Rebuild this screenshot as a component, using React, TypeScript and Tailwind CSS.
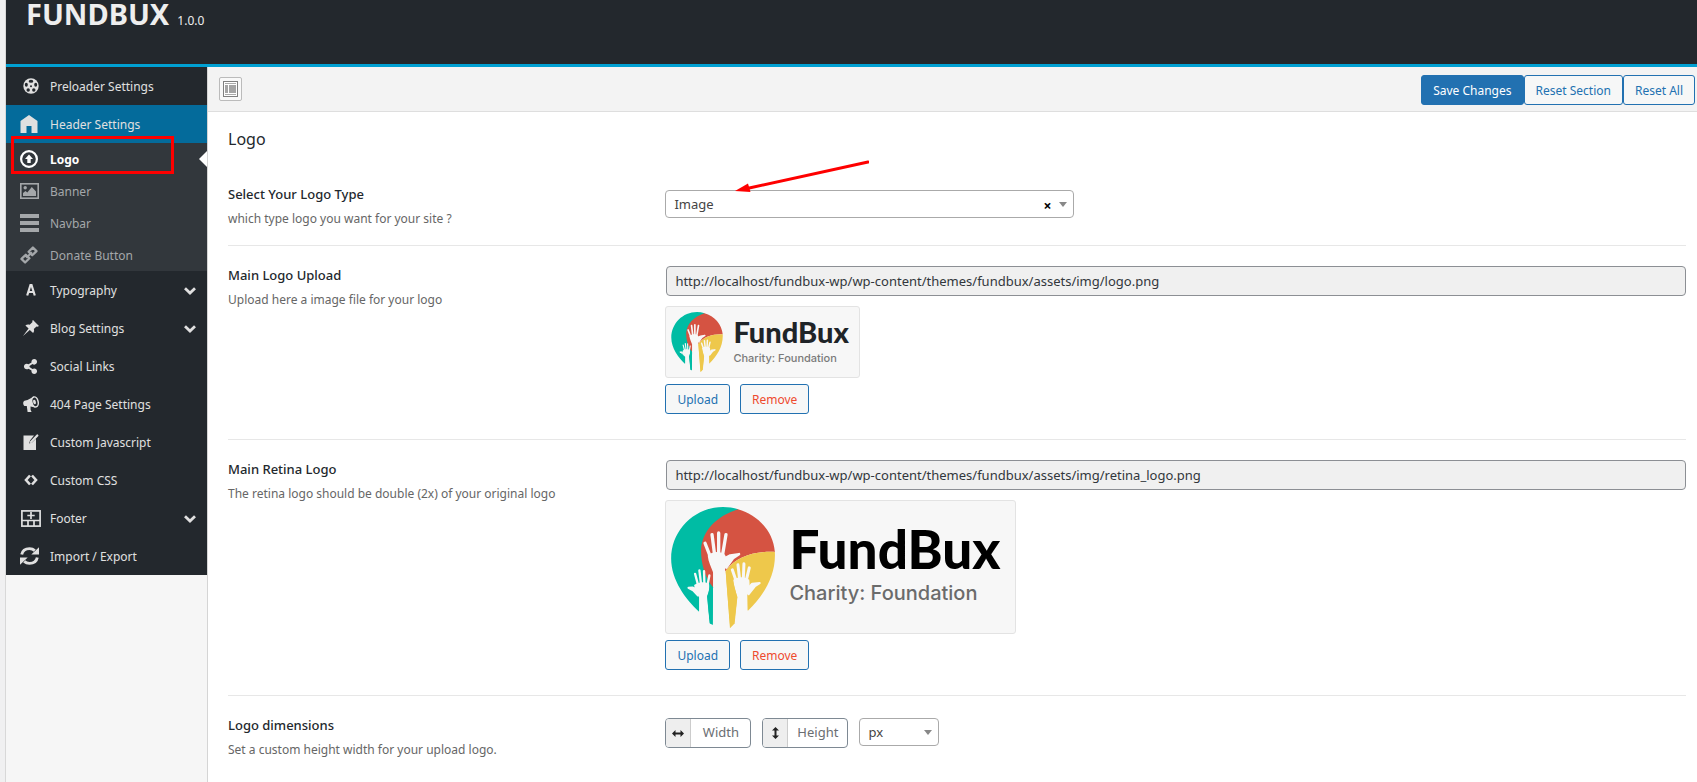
import type { ReactNode } from "react";
import { FaShareAlt } from "react-icons/fa";

type IconProps = { className?: string };

function ReelIcon({ className }: IconProps) {
  return (
    <svg viewBox="0 0 16 16" className={className} aria-hidden="true">
      <circle cx="8" cy="8" r="7.700" fill="currentColor" />
      <g fill="#23282d">
        <ellipse cx="8" cy="3.300" rx="2.300" ry="1.500" />
        <ellipse cx="3.300" cy="6.800" rx="1.500" ry="2" />
        <ellipse cx="12.700" cy="6.800" rx="1.500" ry="2" />
        <ellipse cx="5.200" cy="12" rx="1.700" ry="1.700" />
        <ellipse cx="10.800" cy="12" rx="1.700" ry="1.700" />
        <circle cx="8" cy="8.200" r="1" />
      </g>
    </svg>
  );
}

function HomeIcon({ className }: IconProps) {
  return (
    <svg viewBox="0 0 18 18" className={className} fill="currentColor" aria-hidden="true">
      <path d="M9 0 17.500 6v12H11.500v-7H6.500v7H.5V6Z" />
    </svg>
  );
}

function CircleUpIcon({ className }: IconProps) {
  return (
    <svg viewBox="0 0 18 18" className={className} aria-hidden="true">
      <circle cx="9" cy="9" r="7.900" fill="none" stroke="currentColor" strokeWidth="2.200" />
      <path d="m9 4.600 4 4.500h-2.300v4H7.300v-4H5Z" fill="currentColor" />
    </svg>
  );
}

function PictureIcon({ className }: IconProps) {
  return (
    <svg viewBox="0 0 19 16" className={className} aria-hidden="true">
      <rect x=".8" y=".8" width="17.400" height="14.400" fill="none" stroke="currentColor" strokeWidth="1.600" />
      <circle cx="5.200" cy="4.800" r="1.700" fill="currentColor" />
      <path d="M3 13v-3l2.500-1.900L7.300 9.400 11.800 4 16 8.500V13Z" fill="currentColor" />
    </svg>
  );
}

function LinesIcon({ className }: IconProps) {
  return (
    <svg viewBox="0 0 19 18" className={className} fill="currentColor" aria-hidden="true">
      <path d="M0 0h19v4H0ZM0 7h19v4H0ZM0 14h19v4H0Z" />
    </svg>
  );
}

function LinkIcon({ className }: IconProps) {
  return (
    <svg viewBox="0 0 18 18" className={className} fill="none" stroke="currentColor" strokeWidth="2.300" strokeLinejoin="round" aria-hidden="true">
      <path d="m8.600 5.700 4.300-4.200 3.600 3.600-4.300 4.200Z" />
      <path d="m1.500 12.900 4.300-4.200 3.600 3.600-4.300 4.200Z" />
      <path d="m6.300 11.900 5.600-5.600" strokeWidth="2" />
    </svg>
  );
}

function LetterIcon({ className }: IconProps) {
  return (
    <svg viewBox="0 0 12 12" className={className} fill="none" stroke="currentColor" strokeWidth="2.200" aria-hidden="true">
      <path d="M2.200 11.500 5.500 1h1l3.300 10.500M3.500 8h5" />
    </svg>
  );
}

function PinIcon({ className }: IconProps) {
  return (
    <svg viewBox="0 0 16 16" className={className} fill="currentColor" aria-hidden="true">
      <path d="m10 0 6 6-1.500.7-1-.3-2.700 2.700c.6 1.500.3 2.700-.7 4L6.800 9.900 0 16l5.600-7.400-3.200-3.200c1.300-1 2.800-1.200 4.300-.6l2.800-2.700-.3-1Z" />
    </svg>
  );
}

function MegaphoneIcon({ className }: IconProps) {
  return (
    <svg viewBox="0 0 16 16" className={className} aria-hidden="true">
      <path d="M11 .5 4.500 4 1.500 4.800C-.3 5.500-.2 9.300 1.500 10l2.300.1L4.600 16h4l-1-2-.1-3.400 4.500.9Z" fill="currentColor" />
      <ellipse cx="12" cy="5.900" rx="3.100" ry="5.100" fill="#23282d" stroke="currentColor" strokeWidth="1.500" transform="rotate(-14 12 5.900)" />
      <ellipse cx="11.500" cy="6" rx="1.400" ry="2.300" fill="currentColor" transform="rotate(-14 11.500 6)" />
    </svg>
  );
}

function EditIcon({ className }: IconProps) {
  return (
    <svg viewBox="0 0 16 16" className={className} aria-hidden="true">
      <path d="M.5 1.500H11L7 6.500l-.8 3 2.800-1 4-3.800V16H.5Z" fill="currentColor" />
      <path d="m8 8 6.300-6.500" stroke="currentColor" strokeWidth="2.200" strokeLinecap="round" />
    </svg>
  );
}

function CodeIcon({ className }: IconProps) {
  return (
    <svg viewBox="0 0 14 12" className={className} fill="none" stroke="currentColor" strokeWidth="2.600" aria-hidden="true">
      <path d="M6 1.500 2 6l4 4.500M8 1.500 12 6l-4 4.500" />
    </svg>
  );
}

function FooterIcon({ className }: IconProps) {
  return (
    <svg viewBox="0 0 20 17" className={className} fill="none" stroke="currentColor" strokeWidth="1.700" aria-hidden="true">
      <rect x=".9" y=".9" width="18.200" height="15.200" />
      <path d="M1 10.500h18M7 10.500V16M13 10.500V16" />
      <path d="M10 2v7M6.300 5.500h7.400" />
    </svg>
  );
}

function RefreshIcon({ className }: IconProps) {
  return (
    <svg viewBox="0 0 19 18" className={className} aria-hidden="true">
      <path d="M1.700 7.500C2.500 3.500 6 1.600 9.500 1.600c2 0 3.900.7 5.300 2M17.300 10.500c-.8 4-4.300 5.900-7.800 5.900-2 0-3.900-.7-5.300-2" fill="none" stroke="currentColor" strokeWidth="2.900" />
      <path d="M19 .3v7.200h-7.700ZM0 17.700v-7.200h7.700Z" fill="currentColor" />
    </svg>
  );
}

function ChevronIcon() {
  return (
    <svg viewBox="0 0 12 8" className="mr-[11px] ml-auto h-2 w-3" fill="none" stroke="currentColor" strokeWidth="2.800" aria-hidden="true">
      <path d="m1 1.300 5 4.700 5-4.700" />
    </svg>
  );
}

function CaretIcon({ className }: IconProps) {
  return (
    <svg viewBox="0 0 8 5" className={className} fill="#888" aria-hidden="true">
      <path d="M0 0h8L4 5Z" />
    </svg>
  );
}

function Emblem({ className }: IconProps) {
  return (
    <svg viewBox="64 170 312 364" className={className} aria-hidden="true">
      <path fill="#00bca4" d="M148 485C108 448 64 390 64 325 64 240 134 170 220 170c16 0 31 2 46 7l-60 130-16 105-1 112-9-4-10-70Z" />
      <path fill="#d55342" d="M265 177c61 18 106 66 111 128-64-2-116 15-148 57l-38 50c-24-30-36-70-36-112 3-58 46-102 111-123Z" />
      <path fill="#eec84b" d="M376 305c4 72-34 132-81 177l-32-20-8 58-14 14-13-172c32-42 84-59 148-57Z" />
      <g fill="#f7f7f7" stroke="#f7f7f7" strokeLinecap="round" strokeLinejoin="round">
        <path stroke="none" d="M174 316c12-14 42-14 52-2l6 14c-2 16-7 25-6 38l15 168h-51V366c-6-16-14-30-16-50Z" />
        <path fill="none" strokeWidth="10" d="m182 320-16-41M195 316l-8-63M207 316v-68M218 318l11-65" />
        <path strokeWidth="8" d="m222 326 20-10 26-4-18 12-20 28Z" />
        <path stroke="none" d="M133 405c12-10 34-12 45-3 2 18-2 28-6 36l8 86h-32v-82c-6-12-13-22-15-37Z" />
        <path fill="none" strokeWidth="7" d="m145 405-9-34M154 402l-5-41M164 402l-1-39M173 406l6-30" />
        <path strokeWidth="6" d="m144 436-14-15-14-8 12-1 20 8Z" />
        <path stroke="none" d="M251 389c12-11 37-10 48 0 2 16 1 31-6 44l2 101-43 2 11-96c-5-16-11-31-12-51Z" />
        <path fill="none" strokeWidth="9" d="m259 391-11-32M270 388l-5-44M281 388l2-47M290 391l9-38" />
        <path strokeWidth="7" d="m290 420 18-19 22-2-14 9-19 24Z" />
      </g>
      <path fill="#eec84b" d="m228 364 20 20 15 58-8 78-14 14Z" />
      <path fill="#00bca4" d="m190 412-1 112-9-4-7-78 9-38Z" />
    </svg>
  );
}

type Item = { label: string; icon: ReactNode; expandable?: boolean; active?: boolean };

const topItems: Item[] = [
  { label: "Preloader Settings", icon: <ReelIcon className="ml-[3px] size-4" /> },
  { label: "Header Settings", icon: <HomeIcon className="size-[18px]" />, active: true },
];

const subItems: Item[] = [
  { label: "Logo", icon: <CircleUpIcon className="size-[18px]" />, active: true },
  { label: "Banner", icon: <PictureIcon className="h-4 w-[19px]" /> },
  { label: "Navbar", icon: <LinesIcon className="h-[18px] w-[19px]" /> },
  { label: "Donate Button", icon: <LinkIcon className="size-[18px]" /> },
];

const lowerItems: Item[] = [
  { label: "Typography", icon: <LetterIcon className="ml-[3px] h-3 w-3" />, expandable: true },
  { label: "Blog Settings", icon: <PinIcon className="ml-[3px] size-4" />, expandable: true },
  { label: "Social Links", icon: <FaShareAlt className="ml-[3px] size-[15px]" /> },
  { label: "404 Page Settings", icon: <MegaphoneIcon className="ml-[3px] size-4" /> },
  { label: "Custom Javascript", icon: <EditIcon className="ml-[3px] size-4" /> },
  { label: "Custom CSS", icon: <CodeIcon className="ml-[3px] h-3 w-[14px]" /> },
  { label: "Footer", icon: <FooterIcon className="ml-[3px] h-[17px] w-5" />, expandable: true },
  { label: "Import / Export", icon: <RefreshIcon className="h-[18px] w-[19px]" /> },
];

function ItemIcon({ children }: { children: ReactNode }) {
  return <span className="flex w-[44px] shrink-0 justify-center pb-0.5 pl-0.5">{children}</span>;
}

function MenuItem({ item }: { item: Item }) {
  return (
    <li>
      <a href="#" className={`flex h-[38px] items-center pt-0.5 text-[#e0e0e0] ${item.active ? "bg-[#046b9b]" : ""}`}>
        <ItemIcon>{item.icon}</ItemIcon>
        <span>{item.label}</span>
        {item.expandable && <ChevronIcon />}
      </a>
    </li>
  );
}

function Button({ children, kind = "plain" }: { children: ReactNode; kind?: "plain" | "primary" | "danger" }) {
  const tone =
    kind === "primary" ? "bg-[#2271b1] text-white" : kind === "danger" ? "bg-[#f6f7f7] text-[#ee4a2e]" : "bg-[#f6f7f7] text-[#2271b1]";
  return (
    <button type="button" className={`h-[30px] rounded-[3px] border border-[#2271b1] px-[11px] pt-0.5 ${tone}`}>
      {children}
    </button>
  );
}

function Row({ title, note, htmlFor, last, children }: { title: string; note: string; htmlFor: string; last?: boolean; children: ReactNode }) {
  return (
    <div className={`grid grid-cols-[3fr_7fr] ${last ? "" : "border-b border-[#e7e7e7]"}`}>
      <div className="pt-5">
        <label htmlFor={htmlFor} className="block text-[13px] leading-[18px] font-medium text-[#23282d]">
          {title}
        </label>
        <p className="mt-[7px] leading-[18px] text-[#666]">{note}</p>
      </div>
      <div className="min-w-0">{children}</div>
    </div>
  );
}

function Upload({ id, url, children }: { id: string; url: string; children: ReactNode }) {
  return (
    <div className="pt-5 pb-[25px]">
      <div className="pl-px">
        <input
          id={id}
          readOnly
          value={url}
          className="block h-[30px] w-full rounded border border-[#8c8f94] bg-[#f0f0f0] px-2 text-[13px] text-[#32373c]"
        />
      </div>
      <div className="mt-2.5 flex w-fit rounded-[3px] border border-[#e3e3e3] bg-[#f7f7f7]">{children}</div>
      <div className="mt-1.5 flex gap-2.5">
        <Button>Upload</Button>
        <Button kind="danger">Remove</Button>
      </div>
    </div>
  );
}

function Dimension({ id, label, icon }: { id: string; label: string; icon: ReactNode }) {
  return (
    <div className="flex h-[30px] w-[86px] overflow-hidden rounded border border-[#7e8993]">
      <span className="flex w-[25px] shrink-0 items-center justify-center border-r border-[#ccc] bg-[#eee] text-[#222]">{icon}</span>
      <input id={id} aria-label={label} placeholder={label} className="w-full min-w-0 text-center text-[13px] placeholder:text-[#6b6e72]" />
    </div>
  );
}

export default function App() {
  return (
    <div className="flex min-h-screen bg-[#f0f0f1] pl-[5px] font-['Noto_Sans','Open_Sans',sans-serif] text-xs">
      <div className="flex min-w-0 flex-1 flex-col border-l border-[#d8d8d8] bg-[#f6f6f6]">
        <header className="flex h-[67px] items-start gap-2 border-b-[3px] border-[#00a0d2] bg-[#23282d] pl-5 text-[#eee]">
          <h1 className="text-[29px] leading-7 font-bold">FUNDBUX</h1>
          <span className="pt-3 leading-[18px]">1.0.0</span>
        </header>

        <div className="flex flex-1">
          <nav className="relative w-[201px] shrink-0" aria-label="Theme options">
            <ul className="bg-[#23282d]">
              {topItems.map((item) => (
                <MenuItem key={item.label} item={item} />
              ))}
              <li>
                <ul className="bg-[#32373c]">
                  {subItems.map((item) => (
                    <li key={item.label} className="relative">
                      <a
                        href="#"
                        className={`flex h-8 items-center pt-0.5 ${item.active ? "font-bold text-white" : "text-[#a4a7aa]"}`}
                      >
                        <ItemIcon>{item.icon}</ItemIcon>
                        <span>{item.label}</span>
                      </a>
                      {item.active && (
                        <span className="absolute top-2 right-0 border-y-8 border-r-8 border-y-transparent border-r-white" />
                      )}
                    </li>
                  ))}
                </ul>
              </li>
              {lowerItems.map((item) => (
                <MenuItem key={item.label} item={item} />
              ))}
            </ul>
            <div className="pointer-events-none absolute top-[69px] left-[5px] h-[38px] w-[163px] border-[3px] border-[#fe0000]" />
          </nav>

          <main className="relative min-w-0 flex-1 border-l border-[#d5d5d5] bg-white">
            <div className="flex h-[45px] items-center justify-between border-b border-[#dedede] bg-[#f3f3f3] pr-0.5 pl-[11px]">
              <button
                type="button"
                aria-label="Expand options"
                className="flex h-6 w-[23px] items-center justify-center rounded-[2px] border border-[#bbb] bg-[#f9f9f9]"
              >
                <svg viewBox="0 0 15 16" className="h-4 w-[15px]" aria-hidden="true">
                  <rect x=".5" y=".5" width="14" height="15" fill="#fff" stroke="#808080" />
                  <path d="M2 2.500h11M2 13.500h11" stroke="#aaa" />
                  <path d="M2 4h3v8H2ZM6 4h7v8H6Z" fill="#a5a5a5" />
                </svg>
              </button>
              <div className="flex pt-0.5">
                <Button kind="primary">Save Changes</Button>
                <Button>Reset Section</Button>
                <Button>Reset All</Button>
              </div>
            </div>

            <div className="pr-[11px] pl-5">
              <h2 className="pt-[15px] pb-3.5 text-base leading-6 text-[#23282d]">Logo</h2>

              <Row title="Select Your Logo Type" note="which type logo you want for your site ?" htmlFor="logo-type">
                <div className="pt-[25px] pb-[27px]">
                  <div className="relative w-2/5">
                    <select
                      id="logo-type"
                      className="block h-7 w-full appearance-none rounded border border-[#aaa] bg-white px-2 pt-0.5 text-[13px] text-[#444]"
                    >
                      <option>Image</option>
                      <option>Text</option>
                    </select>
                    <button type="button" aria-label="Clear" className="absolute top-[7px] right-[22px] text-sm leading-[18px] font-bold text-black">
                      ×
                    </button>
                    <CaretIcon className="pointer-events-none absolute top-3 right-[7px] h-[5px] w-2" />
                  </div>
                </div>
              </Row>

              <Row title="Main Logo Upload" note="Upload here a image file for your logo" htmlFor="main-logo">
                <Upload id="main-logo" url="http://localhost/fundbux-wp/wp-content/themes/fundbux/assets/img/logo.png">
                  <div className="flex h-[70px] w-[193px] items-start pt-[5px] pl-[5px]">
                    <Emblem className="h-[60px] w-[52px]" />
                    <div className="pl-2.5">
                      <div className="pt-0.5 font-['Lato',sans-serif] text-[29px] leading-9 font-black text-[#1f2428]">FundBux</div>
                      <div className="font-['Inter',sans-serif] text-[11px] leading-4 font-medium text-[#7a7a7a]">Charity: Foundation</div>
                    </div>
                  </div>
                </Upload>
              </Row>

              <Row title="Main Retina Logo" note="The retina logo should be double (2x) of your original logo" htmlFor="retina-logo">
                <Upload id="retina-logo" url="http://localhost/fundbux-wp/wp-content/themes/fundbux/assets/img/retina_logo.png">
                  <div className="flex h-[132px] w-[349px] items-start pt-[6px] pl-[5px]">
                    <Emblem className="h-[121px] w-[104px]" />
                    <div className="pl-3.5">
                      <div className="pt-2 font-['Lato',sans-serif] text-[53px] leading-[68px] font-black text-black">FundBux</div>
                      <div className="font-['Inter',sans-serif] text-xl leading-5 font-medium text-[#6b6b6b]">Charity: Foundation</div>
                    </div>
                  </div>
                </Upload>
              </Row>

              <Row title="Logo dimensions" note="Set a custom height width for your upload logo." htmlFor="logo-width" last>
                <div className="flex items-start gap-[11px] pt-[22px] pb-5">
                  <Dimension
                    id="logo-width"
                    label="Width"
                    icon={
                      <svg viewBox="0 0 12 7" className="h-[7px] w-3" fill="currentColor" aria-hidden="true">
                        <path d="M0 3.500 3.500 0v2.500h5V0L12 3.500 8.500 7V4.500h-5V7Z" />
                      </svg>
                    }
                  />
                  <Dimension
                    id="logo-height"
                    label="Height"
                    icon={
                      <svg viewBox="0 0 7 12" className="h-3 w-[7px]" fill="currentColor" aria-hidden="true">
                        <path d="M3.500 0 7 3.500H4.500v5H7L3.500 12 0 8.500h2.500v-5H0Z" />
                      </svg>
                    }
                  />
                  <div className="relative w-20">
                    <select
                      aria-label="Unit"
                      className="block h-7 w-full appearance-none rounded border border-[#aaa] bg-white px-2 pt-0.5 text-[13px] text-[#444]"
                    >
                      <option>px</option>
                      <option>em</option>
                      <option>%</option>
                    </select>
                    <CaretIcon className="pointer-events-none absolute top-3 right-[7px] h-[5px] w-2" />
                  </div>
                </div>
              </Row>
            </div>

            <svg viewBox="0 0 134 34" className="pointer-events-none absolute top-[93px] left-[527px] h-[34px] w-[134px]" aria-hidden="true">
              <path d="M12 28.500 133 2" stroke="#fe0000" strokeWidth="3" strokeLinecap="round" />
              <path d="m0 31 13-7.500 2.500 8.500Z" fill="#fe0000" />
            </svg>
          </main>
        </div>
      </div>
    </div>
  );
}
